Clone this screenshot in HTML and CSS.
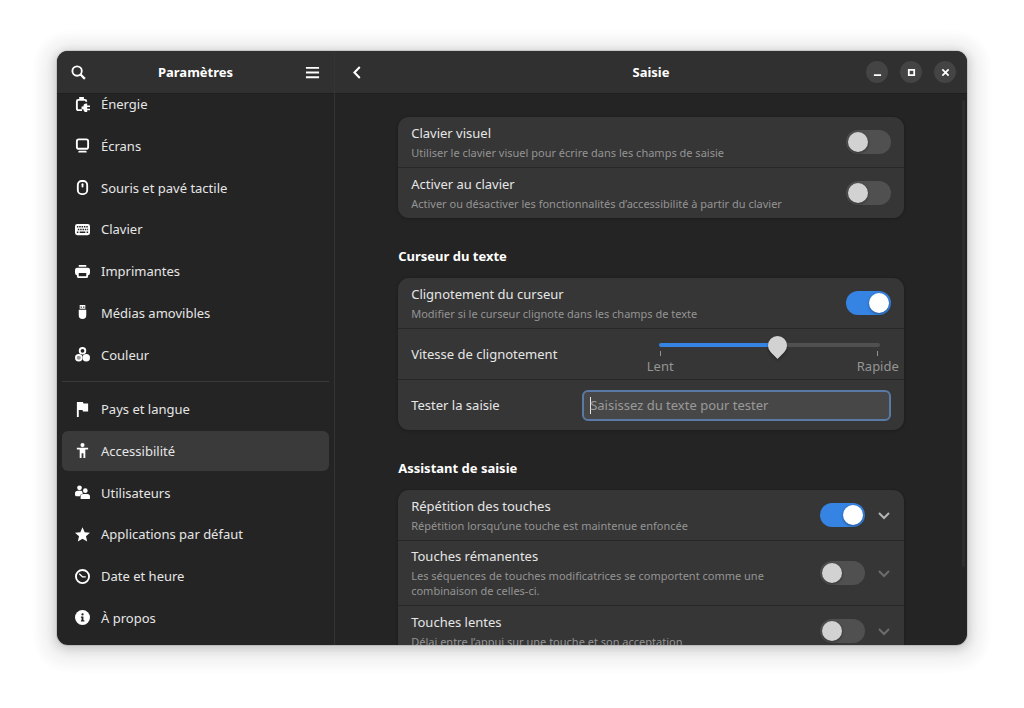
FILE: index.html
```html
<!DOCTYPE html>
<html lang="fr">
<head>
    <meta charset="utf-8">
    <title>Paramètres</title>
    <link rel="stylesheet" href="styles.css">
</head>
<body>
    <div class="window">
        <aside class="sidebar">
            <header class="headerbar">
                <button class="icon-button" aria-label="Rechercher">
                    <svg viewBox="0 0 16 16"><circle cx="6.5" cy="6.5" r="5" fill="none" stroke="currentColor" stroke-width="2"/><path d="M10.2 10.2l4.6 4.6" stroke="currentColor" stroke-width="2.4"/></svg>
                </button>
                <h1>Paramètres</h1>
                <button class="icon-button end" aria-label="Menu">
                    <svg viewBox="0 0 16 16"><path d="M1 3h14M1 8h14M1 13h14" stroke="currentColor" stroke-width="2"/></svg>
                </button>
            </header>
            <nav class="panels">
                <a href="#energie">
                    <svg viewBox="0 0 16 16"><path d="M7.500 14H3.500a1.500 1.500 0 0 1-1.500-1.500v-8A1.500 1.500 0 0 1 3.500 3h7A1.500 1.500 0 0 1 12 4.500V5" fill="none" stroke="currentColor" stroke-width="2"/><path d="M4.500 0h5v3h-5z" fill="currentColor"/><path d="M7 10h2a3 3 0 0 1 3-3h1v2h3v1.600h-3v1.800h3V14h-3v2h-1a3 3 0 0 1-3-3H7z" fill="currentColor"/></svg>
                    Énergie
                </a>
                <a href="#ecrans">
                    <svg viewBox="0 0 16 16"><rect x="2" y="1.500" width="12" height="10" rx="2" fill="none" stroke="currentColor" stroke-width="2"/><path d="M4.500 13.500h7l1 1v1h-9v-1z" fill="currentColor"/></svg>
                    Écrans
                </a>
                <a href="#souris">
                    <svg viewBox="0 0 16 16"><rect x="3" y="1" width="10" height="14" rx="4.200" fill="none" stroke="currentColor" stroke-width="2"/><path d="M8 4.500v2.500" stroke="currentColor" stroke-width="2" stroke-linecap="round"/></svg>
                    Souris et pavé tactile
                </a>
                <a href="#clavier">
                    <svg viewBox="0 0 16 16"><rect x="0" y="2" width="16" height="12" rx="2.500" fill="currentColor"/><path d="M2 5h12M3 8h11" stroke="#242424" stroke-width="1.600" stroke-dasharray="1.600 .9"/><path d="M2 11h1.600M5 11h6M12.400 11H14" stroke="#242424" stroke-width="1.600"/></svg>
                    Clavier
                </a>
                <a href="#imprimantes">
                    <svg viewBox="0 0 16 16"><path d="M4 1h8v2H4zM2.500 4h11A2.500 2.500 0 0 1 16 6.500v3a2.500 2.500 0 0 1-2 2.400V13a2 2 0 0 1-2 2H4a2 2 0 0 1-2-2v-1.100a2.500 2.500 0 0 1-2-2.400v-3A2.500 2.500 0 0 1 2.500 4zM4 9.500V13h8V9.500z" fill="currentColor" fill-rule="evenodd"/></svg>
                    Imprimantes
                </a>
                <a href="#medias">
                    <svg viewBox="0 0 16 16"><path d="M5 0h6v4H5zM6 1.500v1.300h1.300V1.500zM8.700 1.500v1.300H10V1.500zM4 5h8v6a4 4 0 0 1-8 0z" fill="currentColor" fill-rule="evenodd"/></svg>
                    Médias amovibles
                </a>
                <a href="#couleur">
                    <svg viewBox="0 0 16 16"><circle cx="8" cy="4" r="3" fill="none" stroke="currentColor" stroke-width="2"/><circle cx="4" cy="11.500" r="4" fill="currentColor"/><circle cx="4" cy="11.500" r="2.200" fill="#999"/><circle cx="12" cy="11.500" r="4" fill="currentColor"/></svg>
                    Couleur
                </a>
                <hr>
                <a href="#pays">
                    <svg viewBox="0 0 16 16"><path d="M2 0h6.500l.5 1.500h5V10H8.500L8 8.500H4V16H2z" fill="currentColor"/></svg>
                    Pays et langue
                </a>
                <a href="#accessibilite" class="selected" aria-current="page">
                    <svg viewBox="0 0 16 16"><circle cx="8" cy="2.200" r="2.200" fill="currentColor"/><path d="M2 5h12v2h-3v9H9v-5H7v5H5V7H2z" fill="currentColor"/></svg>
                    Accessibilité
                </a>
                <a href="#utilisateurs">
                    <svg viewBox="0 0 16 16"><circle cx="4.800" cy="3" r="2.500" fill="currentColor"/><circle cx="11" cy="6" r="2.500" fill="currentColor"/><path d="M0 11V9a3 3 0 0 1 3-3h3.500q1 0 1.200.8Q8 8.500 8.500 9L6 10.500l-.6 1.500H1zM6 15v-2.500A3 3 0 0 1 9 9.500h4a3 3 0 0 1 3 3V14q0 1-1 1z" fill="currentColor"/></svg>
                    Utilisateurs
                </a>
                <a href="#applications">
                    <svg viewBox="0 0 16 16"><path d="M8 .3l2.300 5.200 5.700.5-4.300 3.800L13 15.500l-5-3.100-5 3.100 1.300-5.700L0 6l5.700-.5z" fill="currentColor"/></svg>
                    Applications par défaut
                </a>
                <a href="#date">
                    <svg viewBox="0 0 16 16"><circle cx="8" cy="8" r="7" fill="none" stroke="currentColor" stroke-width="2"/><path d="M4.500 5L8 8.300h3.500" fill="none" stroke="currentColor" stroke-width="1.300"/></svg>
                    Date et heure
                </a>
                <a href="#apropos">
                    <svg viewBox="0 0 16 16"><circle cx="8" cy="8" r="8" fill="currentColor"/><circle cx="8" cy="4.700" r="1.200" fill="#242424"/><path d="M6.300 7H9v4h1v1.300H6.300V11H7V8.300h-.7z" fill="#242424"/></svg>
                    À propos
                </a>
            </nav>
        </aside>

        <main class="content">
            <header class="headerbar">
                <button class="icon-button" aria-label="Retour">
                    <svg viewBox="0 0 16 16"><path d="M11.500 2.200L5.800 8l5.700 5.800" fill="none" stroke="currentColor" stroke-width="2.200"/></svg>
                </button>
                <h2>Saisie</h2>
                <div class="window-controls end">
                    <button aria-label="Réduire"><svg viewBox="0 0 10 10"><path d="M1 8h8" stroke="currentColor" stroke-width="2"/></svg></button>
                    <button aria-label="Agrandir"><svg viewBox="0 0 10 10"><path d="M2 2h6v6H2z" fill="none" stroke="currentColor" stroke-width="2"/></svg></button>
                    <button aria-label="Fermer"><svg viewBox="0 0 10 10"><path d="M1.500 1.500l7 7M8.500 1.500l-7 7" stroke="currentColor" stroke-width="2"/></svg></button>
                </div>
            </header>

            <div class="page">
                <section class="card">
                    <div class="row">
                        <label class="text" for="visuel">
                            <span class="title">Clavier visuel</span>
                            <span class="subtitle">Utiliser le clavier visuel pour écrire dans les champs de saisie</span>
                        </label>
                        <input type="checkbox" class="switch" id="visuel">
                    </div>
                    <div class="row">
                        <label class="text" for="activer">
                            <span class="title">Activer au clavier</span>
                            <span class="subtitle">Activer ou désactiver les fonctionnalités d’accessibilité à partir du clavier</span>
                        </label>
                        <input type="checkbox" class="switch" id="activer">
                    </div>
                </section>

                <h3>Curseur du texte</h3>
                <section class="card">
                    <div class="row">
                        <label class="text" for="clignotement">
                            <span class="title">Clignotement du curseur</span>
                            <span class="subtitle">Modifier si le curseur clignote dans les champs de texte</span>
                        </label>
                        <input type="checkbox" class="switch" id="clignotement" checked>
                    </div>
                    <div class="row speed-row">
                        <label class="title" for="vitesse">Vitesse de clignotement</label>
                        <div class="scale">
                            <input type="range" id="vitesse" min="0" max="100" value="54">
                            <div class="marks">
                                <span>Lent</span>
                                <span>Rapide</span>
                            </div>
                        </div>
                    </div>
                    <div class="row">
                        <label class="title entry-label" for="tester">Tester la saisie</label>
                        <input type="text" class="entry" id="tester" placeholder="Saisissez du texte pour tester">
                    </div>
                </section>

                <h3>Assistant de saisie</h3>
                <section class="card">
                    <div class="row">
                        <label class="text" for="repetition">
                            <span class="title">Répétition des touches</span>
                            <span class="subtitle">Répétition lorsqu’une touche est maintenue enfoncée</span>
                        </label>
                        <input type="checkbox" class="switch" id="repetition" checked>
                        <button class="expander" aria-label="Développer">
                            <svg viewBox="0 0 14 14"><path d="M2 5l5 5 5-5" fill="none" stroke="currentColor" stroke-width="2"/></svg>
                        </button>
                    </div>
                    <div class="row">
                        <label class="text" for="remanentes">
                            <span class="title">Touches rémanentes</span>
                            <span class="subtitle">Les séquences de touches modificatrices se comportent comme une combinaison de celles-ci.</span>
                        </label>
                        <input type="checkbox" class="switch" id="remanentes">
                        <button class="expander" aria-label="Développer" disabled>
                            <svg viewBox="0 0 14 14"><path d="M2 5l5 5 5-5" fill="none" stroke="currentColor" stroke-width="2"/></svg>
                        </button>
                    </div>
                    <div class="row">
                        <label class="text" for="lentes">
                            <span class="title">Touches lentes</span>
                            <span class="subtitle">Délai entre l’appui sur une touche et son acceptation</span>
                        </label>
                        <input type="checkbox" class="switch" id="lentes">
                        <button class="expander" aria-label="Développer" disabled>
                            <svg viewBox="0 0 14 14"><path d="M2 5l5 5 5-5" fill="none" stroke="currentColor" stroke-width="2"/></svg>
                        </button>
                    </div>
                </section>
                <div class="scrollbar"></div>
            </div>
        </main>
    </div>
</body>
</html>
```
FILE: styles.css
```css
* {
    box-sizing: border-box;
}

body {
    margin: 0;
    padding: 51px 57px 63px;
    height: 100vh;
    background: #fff;
    color: #e6e6e6;
    font-family: "Noto Sans", sans-serif;
    font-size: 13px;
    line-height: 20px;
}

h1, h2, h3 {
    margin: 0;
    font-size: 13px;
    font-weight: 700;
    color: #fff;
}

button {
    padding: 0;
    border: none;
    background: none;
    color: #fff;
}

svg {
    display: block;
}

.window {
    display: flex;
    height: 100%;
    overflow: hidden;
    border-radius: 11px;
    background: #242424;
    box-shadow: 0 0 0 1px rgba(0, 0, 0, 0.1),
        0 2px 8px 2px rgba(0, 0, 0, 0.13),
        0 3px 19px 9px rgba(0, 0, 0, 0.08),
        0 4px 8px 20px rgba(0, 0, 0, 0.02);
}

.headerbar {
    display: grid;
    grid-template-columns: 1fr auto 1fr;
    align-items: center;
    flex: none;
    height: 43px;
    padding: 0 14px;
    background: #303030;
    border-bottom: 1px solid #1f1f1f;
    position: relative;
}

.end {
    justify-self: end;
}

.icon-button {
    width: 15px;
}

/* Sidebar */
.sidebar {
    display: flex;
    flex-direction: column;
    width: 278px;
    flex: none;
    border-right: 1px solid #343434;
    overflow: hidden;
}

.panels {
    display: flex;
    flex-direction: column;
    justify-content: space-between;
    flex: 1;
    margin-top: -10px;
    padding: 0 5px 7px;
}

.panels a {
    display: flex;
    align-items: center;
    gap: 11px;
    height: 40px;
    padding: 0 13px;
    border-radius: 6px;
    color: inherit;
    text-decoration: none;
}

.panels svg {
    width: 15px;
    height: 15px;
    color: #fff;
}

.panels .selected {
    background: #3a3a3a;
}

.panels hr {
    width: 100%;
    margin: 5px 0;
    border: none;
    border-top: 1px solid #3a3a3a;
}

/* Content */
.content {
    display: flex;
    flex-direction: column;
    flex: 1;
    min-width: 0;
}

.window-controls {
    display: flex;
    gap: 12px;
    margin-right: -3px;
}

.window-controls button {
    display: grid;
    place-items: center;
    width: 22px;
    height: 22px;
    border-radius: 50%;
    background: #444;
}

.window-controls svg {
    width: 9px;
    height: 9px;
}

.page {
    flex: 1;
    min-height: 0;
    padding: 23px 10% 0;
    overflow: hidden;
    position: relative;
}

.scrollbar {
    position: absolute;
    top: 6px;
    right: 2px;
    bottom: 78px;
    width: 3px;
    border-radius: 2px;
    background: #2d2d2d;
}

.page h3 {
    margin: 28px 0 12px;
}

.card {
    border-radius: 11px;
    background: #363636;
    box-shadow: 0 0 0 1px rgba(0, 0, 0, 0.06), 0 1px 3px 1px rgba(0, 0, 0, 0.1);
}

.row {
    display: flex;
    align-items: center;
    min-height: 50px;
    padding: 5px 13px;
}

.row + .row {
    border-top: 1px solid #272727;
    min-height: 51px;
}

.text {
    display: flex;
    flex-direction: column;
    gap: 2px;
    flex: 1;
    padding: 0 40px 2px 0;
}

.subtitle {
    font-size: 11px;
    line-height: 15px;
    color: #949494;
}

.switch {
    appearance: none;
    flex: none;
    width: 45px;
    height: 24px;
    margin: 0;
    padding: 2px;
    border-radius: 12px;
    background: #505050;
}

.switch::before {
    content: "";
    display: block;
    width: 20px;
    height: 20px;
    border-radius: 50%;
    background: #d2d2d2;
    box-shadow: 0 1px 3px rgba(0, 0, 0, 0.4);
}

.switch:checked {
    background: #3584e4;
}

.switch:checked::before {
    margin-left: auto;
    background: #fff;
}

.expander {
    width: 14px;
    margin-left: 12px;
    color: #b4b4b4;
}

.expander:disabled {
    color: #6c6c6c;
}

.speed-row {
    justify-content: space-between;
    padding: 0 5px 0 13px;
}

.scale {
    display: flex;
    flex-direction: column;
    width: 252px;
}

.scale input {
    appearance: none;
    height: 4px;
    margin: 11px 19px 4px 12px;
    border-radius: 2px;
    background: linear-gradient(to right, #3584e4 54%, #505050 54%);
}

/* Round knob whose square corner points down at the marks */
.scale input::-webkit-slider-thumb {
    appearance: none;
    width: 19px;
    height: 19px;
    border-radius: 50% 50% 0 50%;
    background: #d2d2d2;
    box-shadow: 1px 1px 3px rgba(0, 0, 0, 0.35);
    transform: rotate(45deg);
}

.marks {
    display: flex;
    justify-content: space-between;
    color: #949494;
}

.marks span {
    display: flex;
    flex-direction: column;
    align-items: center;
}

.marks span::before {
    content: "";
    width: 1px;
    height: 5px;
    background: #949494;
}

.entry-label {
    width: 171px;
}

.entry {
    flex: 1;
    min-width: 0;
    height: 31px;
    padding: 0 6px;
    border: 2px solid #5a7aa6;
    border-radius: 6px;
    outline: none;
    color: #fff;
    font: inherit;
    background: linear-gradient(#e6e6e6, #e6e6e6) 6px center / 1px 17px no-repeat #474747;
}

.entry::placeholder {
    color: #9a9a9a;
}
```
